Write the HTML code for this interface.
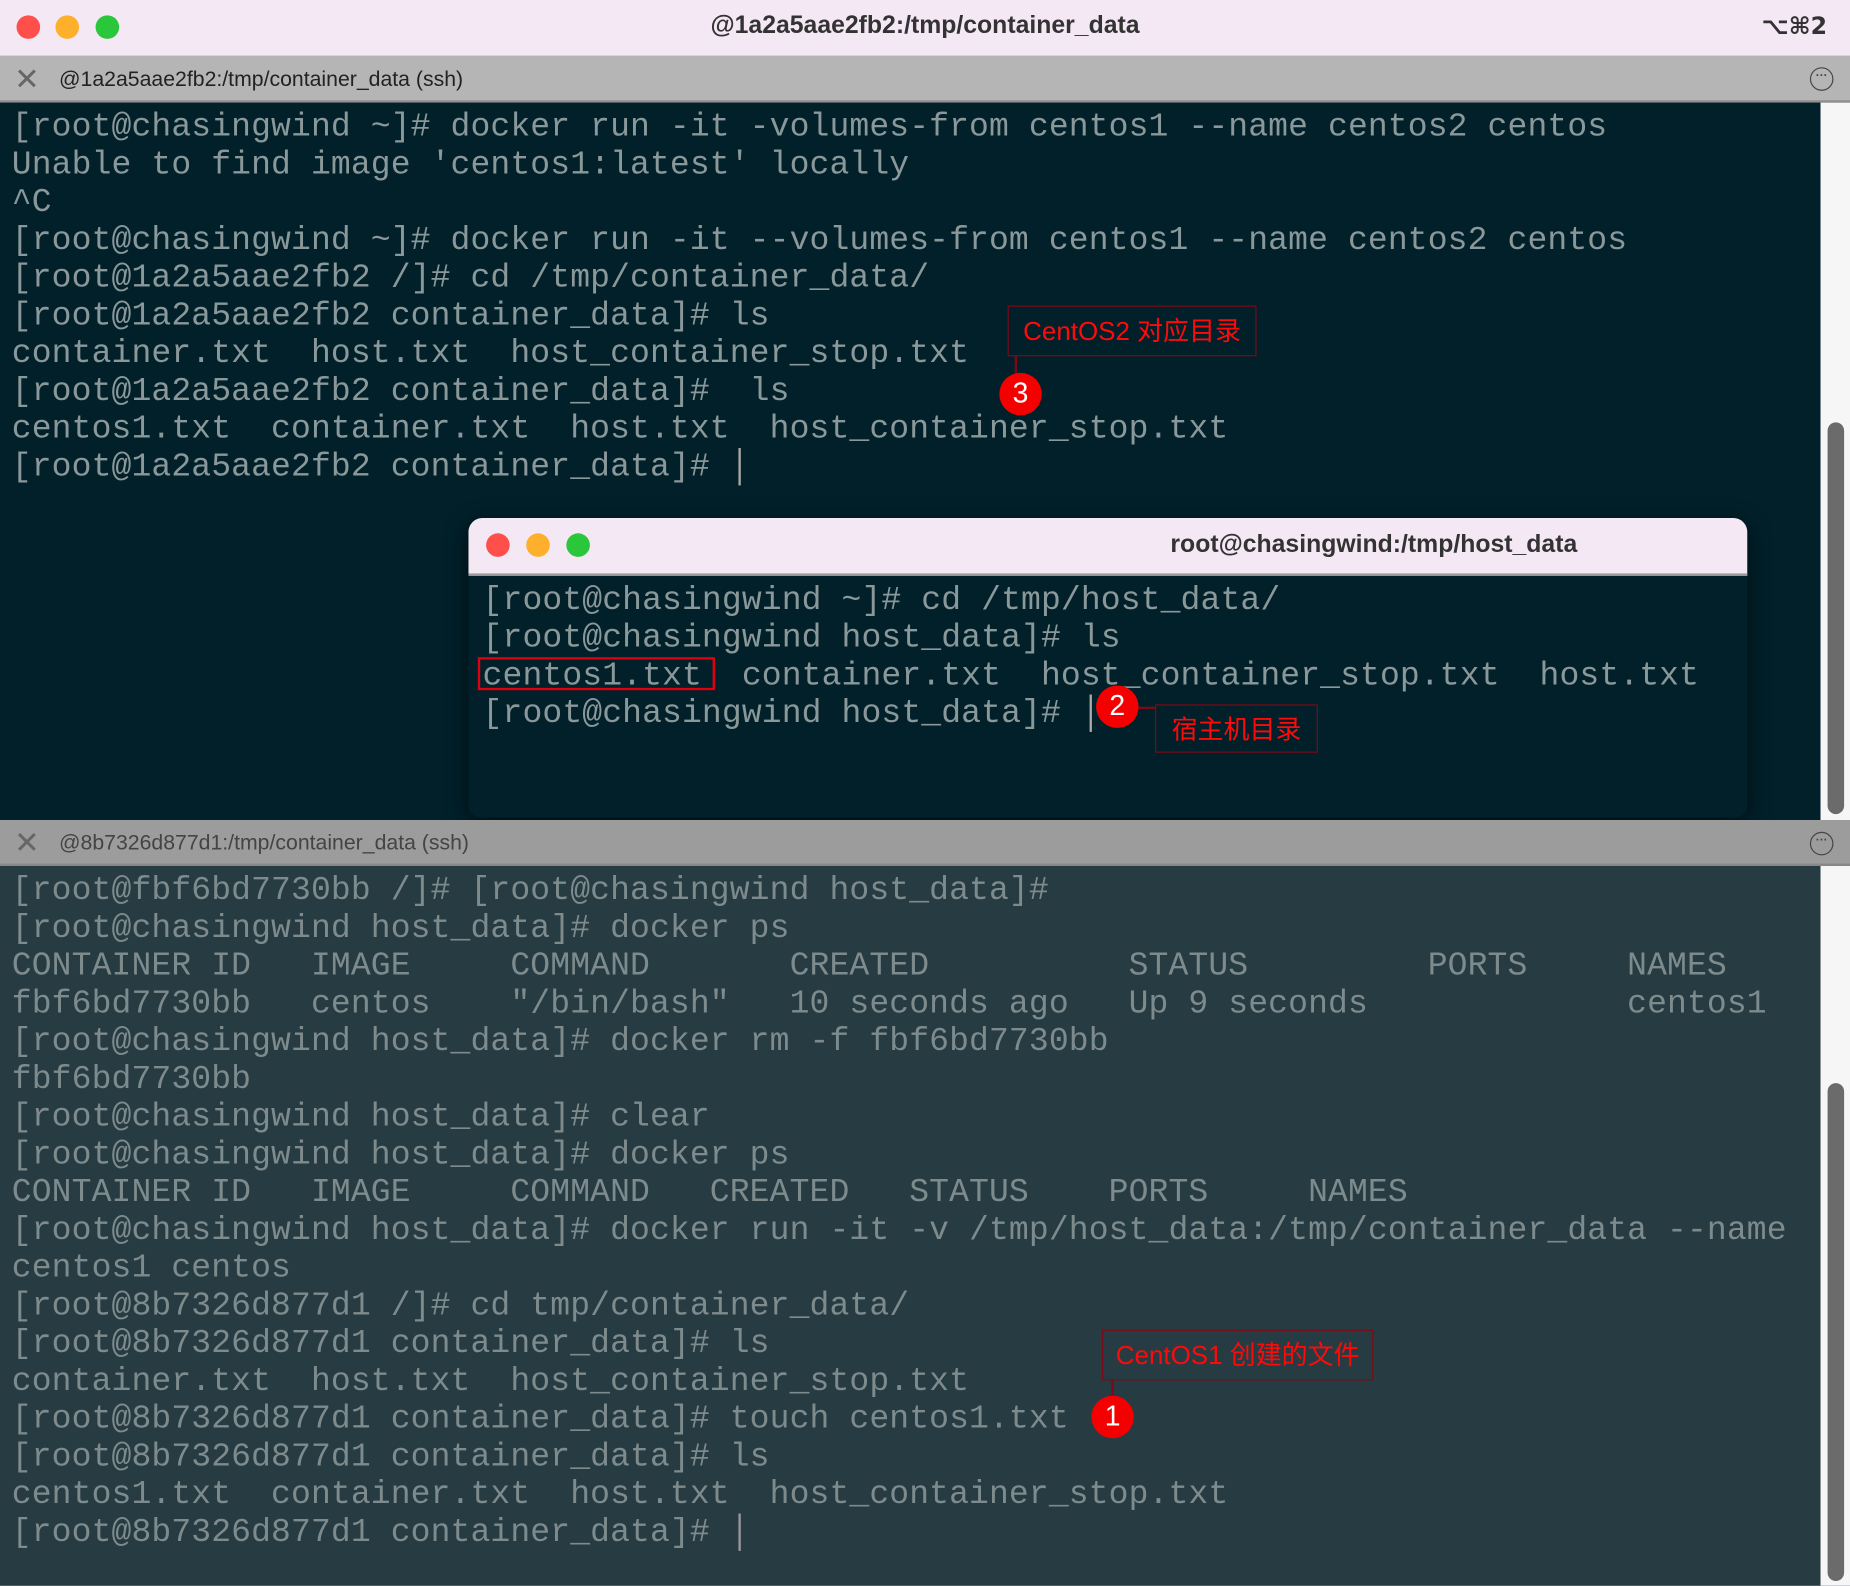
<!DOCTYPE html>
<html><head><meta charset="utf-8"><style>
html,body{margin:0;padding:0;background:#fff;overflow:hidden}
#w{position:absolute;left:0;top:0;width:1568px;height:1344px;transform:scale(1.17985);transform-origin:0 0;overflow:hidden;background:#01202a}
.abs{position:absolute}
.mono{font-family:"Liberation Mono","DejaVu Sans Mono",monospace;font-size:28px;line-height:32px;white-space:pre;letter-spacing:0.1px}
.sans{font-family:"Liberation Sans","Noto Sans CJK SC",sans-serif}
.dot{position:absolute;width:20px;height:20px;border-radius:50%}
.badge{position:absolute;width:36px;height:36px;border-radius:50%;background:#f40000;color:#fff;font:24px/36px "Liberation Sans",sans-serif;text-align:center}
.lbl{position:absolute;border:1.5px solid #7c0a16;color:#ff0a0a;font-family:"Liberation Sans","Noto Sans CJK SC",sans-serif;font-size:22px;text-align:center;box-sizing:border-box}
</style></head><body><div id="w">
<div class="abs" style="left:0;top:0;width:1568px;height:47px;background:#f4e8f5;border-bottom:1px solid #c8c0c8"></div>
<div class="dot" style="left:14px;top:13px;background:#fe4f4a"></div>
<div class="dot" style="left:47px;top:13px;background:#feb02c"></div>
<div class="dot" style="left:81px;top:13px;background:#2bc73a"></div>
<div class="abs sans" style="left:0;width:1568px;top:10px;text-align:center;font-size:21px;font-weight:bold;color:#333">@1a2a5aae2fb2:/tmp/container_data</div>
<div class="abs" style="left:1493px;top:10px;font:bold 20px 'DejaVu Sans',sans-serif;color:#333">⌥⌘2</div>
<div class="abs" style="left:0;top:48px;width:1568px;height:37px;background:#b5b5b5;border-bottom:2px solid #8e8e8e"></div>
<div class="abs sans" style="left:12px;top:52px;font-size:26px;color:#666">✕</div>
<div class="abs sans" style="left:50px;top:57px;font-size:18px;color:#222">@1a2a5aae2fb2:/tmp/container_data (ssh)</div>
<div class="abs" style="left:1534px;top:57px;width:18px;height:18px;border:1.5px solid #444;border-radius:50%;font:bold 10px/14px sans-serif;text-align:center;color:#444">···</div>
<div class="abs" style="left:0;top:87px;width:1543px;height:608px;background:#01202a"></div>
<div class="abs" style="left:1543px;top:87px;width:25px;height:608px;background:#f6f6f6"></div>
<div class="abs" style="left:1549px;top:358px;width:14px;height:332px;background:#6b6b6b;border-radius:7px"></div>
<div class="abs mono" style="left:10px;top:93px;color:#8a989a">[root@chasingwind ~]# docker run -it -volumes-from centos1 --name centos2 centos
Unable to find image 'centos1:latest' locally
^C
[root@chasingwind ~]# docker run -it --volumes-from centos1 --name centos2 centos
[root@1a2a5aae2fb2 /]# cd /tmp/container_data/
[root@1a2a5aae2fb2 container_data]# ls
container.txt  host.txt  host_container_stop.txt
[root@1a2a5aae2fb2 container_data]#  ls
centos1.txt  container.txt  host.txt  host_container_stop.txt
[root@1a2a5aae2fb2 container_data]# <span style="color:#aaa">│</span></div>
<div class="lbl" style="left:854px;top:259px;width:211px;height:43px;line-height:41px">CentOS2 对应目录</div>
<div class="abs" style="left:860px;top:302px;width:1.5px;height:16px;background:#7c0a16"></div>
<div class="badge" style="left:847px;top:316px">3</div>
<div class="abs" style="left:397px;top:439px;width:1084px;height:254px;background:#01202a;border-radius:12px 12px 10px 10px;box-shadow:0 4px 18px rgba(0,0,0,.6);overflow:hidden">
 <div class="abs" style="left:0;top:0;width:1084px;height:47px;background:#f4e8f5;border-bottom:2px solid #9a9a9a"></div>
 <div class="dot" style="left:15px;top:13px;background:#fe4f4a"></div>
 <div class="dot" style="left:49px;top:13px;background:#feb02c"></div>
 <div class="dot" style="left:83px;top:13px;background:#2bc73a"></div>
 <div class="abs sans" style="left:595px;top:11px;font-size:21px;font-weight:bold;color:#333">root@chasingwind:/tmp/host_data</div>
 <div class="abs mono" style="left:12px;top:55px;color:#8a989a">[root@chasingwind ~]# cd /tmp/host_data/
[root@chasingwind host_data]# ls
centos1.txt  container.txt  host_container_stop.txt  host.txt
[root@chasingwind host_data]# <span style="color:#aaa">│</span></div>
 <div class="abs" style="left:8px;top:118px;width:201px;height:28px;border:2px solid #e00010;box-sizing:border-box"></div>
</div>
<div class="badge" style="left:929px;top:581px">2</div>
<div class="abs" style="left:965px;top:599px;width:14px;height:1.5px;background:#7c0a16"></div>
<div class="lbl" style="left:979px;top:597px;width:138px;height:41px;line-height:41px">宿主机目录</div>
<div class="abs" style="left:0;top:695px;width:1568px;height:37px;background:#9c9c9c;border-bottom:2px solid #888"></div>
<div class="abs sans" style="left:12px;top:699px;font-size:26px;color:#666">✕</div>
<div class="abs sans" style="left:50px;top:704px;font-size:18px;color:#444">@8b7326d877d1:/tmp/container_data (ssh)</div>
<div class="abs" style="left:1534px;top:705px;width:18px;height:18px;border:1.5px solid #444;border-radius:50%;font:bold 10px/14px sans-serif;text-align:center;color:#444">···</div>
<div class="abs" style="left:0;top:734px;width:1543px;height:610px;background:#273b42"></div>
<div class="abs" style="left:1543px;top:734px;width:25px;height:610px;background:#f6f6f6"></div>
<div class="abs" style="left:1549px;top:918px;width:14px;height:422px;background:#6b6b6b;border-radius:7px"></div>
<div class="abs mono" style="left:10px;top:740px;color:#7e8b8d">[root@fbf6bd7730bb /]# [root@chasingwind host_data]#
[root@chasingwind host_data]# docker ps
CONTAINER ID   IMAGE     COMMAND       CREATED          STATUS         PORTS     NAMES
fbf6bd7730bb   centos    "/bin/bash"   10 seconds ago   Up 9 seconds             centos1
[root@chasingwind host_data]# docker rm -f fbf6bd7730bb
fbf6bd7730bb
[root@chasingwind host_data]# clear
[root@chasingwind host_data]# docker ps
CONTAINER ID   IMAGE     COMMAND   CREATED   STATUS    PORTS     NAMES
[root@chasingwind host_data]# docker run -it -v /tmp/host_data:/tmp/container_data --name
centos1 centos
[root@8b7326d877d1 /]# cd tmp/container_data/
[root@8b7326d877d1 container_data]# ls
container.txt  host.txt  host_container_stop.txt
[root@8b7326d877d1 container_data]# touch centos1.txt
[root@8b7326d877d1 container_data]# ls
centos1.txt  container.txt  host.txt  host_container_stop.txt
[root@8b7326d877d1 container_data]# <span style="color:#999">│</span></div>
<div class="lbl" style="left:934px;top:1127px;width:230px;height:43px;line-height:41px">CentOS1 创建的文件</div>
<div class="abs" style="left:942px;top:1170px;width:1.5px;height:14px;background:#7c0a16"></div>
<div class="badge" style="left:925px;top:1183px">1</div>
</div></body></html>
